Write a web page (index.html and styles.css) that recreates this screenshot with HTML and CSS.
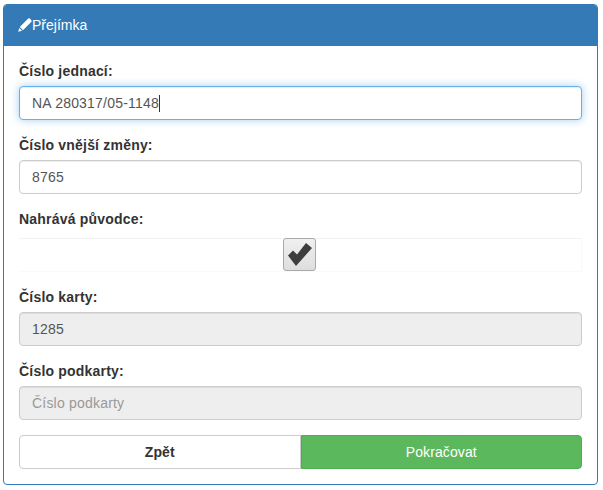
FILE: index.html
```html
<!DOCTYPE html>
<html lang="en">
<head>
    <meta charset="UTF-8">
    <meta name="viewport" content="width=device-width, initial-scale=1.0">
    <title>Přejímka</title>
    <link rel="stylesheet" href="styles.css">
</head>
<body>

<div class="panel">
    <div class="panel-heading">
        <svg class="pencil" viewBox="0 0 14 14" width="14" height="14">
            <path d="M10.2 0.6 Q11 0 11.8 0.6 L13.4 2.2 Q14 3 13.4 3.8 L5 12.2 L1.8 9 Z M1.2 9.9 L4.1 12.8 L0.2 13.8 Z" fill="#fff"/>
        </svg>
        <span>Přejímka</span>
    </div>
    <div class="panel-body">
        <div class="form-group">
            <label>Číslo jednací:</label>
            <div class="form-control focused">NA 280317/05-1148<span class="caret"></span></div>
        </div>
        <div class="form-group">
            <label>Číslo vnější změny:</label>
            <input class="form-control" type="text" value="8765">
        </div>
        <div class="form-group">
            <label>Nahrává původce:</label>
            <div class="check-row">
                <div class="check-box">
                    <svg viewBox="0 0 25 23" width="25" height="23">
                        <path d="M1 12.5 L6 7.5 L10 11.5 L19 0 L25 5 L9 23 Z" fill="#3d3d3d"/>
                    </svg>
                </div>
            </div>
        </div>
        <div class="form-group">
            <label>Číslo karty:</label>
            <input class="form-control" type="text" value="1285" disabled>
        </div>
        <div class="form-group">
            <label>Číslo podkarty:</label>
            <input class="form-control" type="text" placeholder="Číslo podkarty" disabled>
        </div>
        <div class="btn-group">
            <button class="btn btn-back">Zpět</button>
            <button class="btn btn-next">Pokračovat</button>
        </div>
    </div>
</div>

</body>
</html>
```

FILE: styles.css
```css
* {
    box-sizing: border-box;
}

body {
    font-family: 'Liberation Sans', Arial, sans-serif;
    font-size: 14px;
    line-height: 20px;
    color: #333;
    background-color: #fff;
    margin: 0;
    padding: 4px 5px 0 3px;
}

.panel {
    border: 1px solid #337ab7;
    border-radius: 4px;
    background-color: #fff;
}

.panel-heading {
    display: flex;
    align-items: center;
    padding: 10px 14px;
    background-color: #337ab7;
    border-bottom: 1px solid #337ab7;
    color: #fff;
    border-radius: 3px 3px 0 0;
}

.pencil {
    display: block;
}

.panel-body {
    padding: 15px;
}

.form-group {
    margin-bottom: 15px;
}

label {
    display: block;
    margin-bottom: 5px;
    font-weight: bold;
    letter-spacing: 0.2px;
}

.form-control {
    display: block;
    width: 100%;
    height: 34px;
    padding: 6px 12px;
    font-family: inherit;
    font-size: 14px;
    line-height: 20px;
    letter-spacing: 0.2px;
    color: #555;
    background-color: #fff;
    border: 1px solid #ccc;
    border-radius: 4px;
    box-shadow: inset 0 1px 1px rgba(0, 0, 0, 0.075);
}

.form-control:disabled {
    background-color: #eee;
    opacity: 1;
}

.form-control::placeholder {
    color: #999;
    opacity: 1;
}

.focused {
    border-color: #66afe9;
    box-shadow: inset 0 1px 1px rgba(0, 0, 0, 0.075), 0 0 8px rgba(102, 175, 233, 0.6);
}

.caret {
    display: inline-block;
    width: 1px;
    height: 17px;
    vertical-align: -4px;
    background-color: #333;
}

.check-row {
    display: flex;
    justify-content: center;
    height: 34px;
    margin-top: 9px;
    padding-right: 2px;
    border-top: 1px solid #f3f3f3;
    border-right: 1px solid #f8f8f8;
    border-bottom: 1px solid #fafafa;
}

.check-box {
    display: flex;
    align-items: center;
    justify-content: center;
    width: 33px;
    height: 33px;
    margin-top: -1px;
    border: 1px solid #aaa;
    border-radius: 3px;
    background: linear-gradient(#f0f0f0, #dedede);
}

.btn-group {
    display: flex;
}

.btn {
    flex: 1;
    height: 34px;
    padding: 6px 12px;
    font-family: inherit;
    font-size: 14px;
    line-height: 20px;
    letter-spacing: 0.1px;
    border: 1px solid #ccc;
    cursor: pointer;
}

.btn-back {
    color: #333;
    font-weight: bold;
    background-color: #fff;
    border-radius: 4px 0 0 4px;
}

.btn-next {
    color: #fff;
    background-color: #5cb85c;
    border-color: #4cae4c;
    border-radius: 0 4px 4px 0;
}
```
